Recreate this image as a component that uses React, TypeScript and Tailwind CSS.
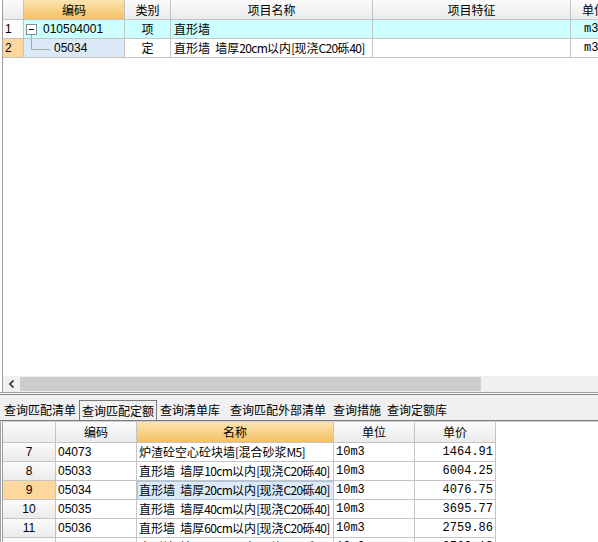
import React from "react";

const cjk = "font-['Noto_Sans_CJK_SC',sans-serif]";
const num = "font-['Liberation_Sans','Noto_Sans_CJK_SC',sans-serif]";
const mono = "font-['Liberation_Mono','Noto_Sans_CJK_SC',monospace]";

const grayHead = "bg-linear-to-b from-[#fbfbfb] to-[#ebebeb]";
const orangeHead = "bg-linear-to-b from-[#fce4b0] to-[#f5c062]";

type CellProps = {
  w: string;
  className?: string;
  children?: React.ReactNode;
};

function Cell({ w, className = "", children }: CellProps) {
  return (
    <div
      className={`${w} box-border flex h-full shrink-0 items-center overflow-hidden whitespace-nowrap border-r border-b border-[#c4c4c4] text-[12px] text-black ${className}`}
    >
      {children}
    </div>
  );
}

// the grid font draws latin half-width, so squeeze the ascii runs a bit
function Mixed({ text }: { text: string }) {
  const parts = text.split(/([\x20-\x7e]+)/).filter(Boolean);
  return (
    <span>
      {parts.map((p, i) =>
        /^[\x20-\x7e]+$/.test(p) ? (
          <span key={i} className="tracking-[-0.7px]">
            {p.replace(/ /g, "\u2002")}
          </span>
        ) : (
          <span key={i}>{p}</span>
        )
      )}
    </span>
  );
}

function MinusBox() {
  return (
    <svg width="11" height="19" viewBox="0 0 11 19" className="shrink-0">
      <rect x="0.5" y="4.5" width="10" height="10" fill="#fff" stroke="#8a8a8a" />
      <line x1="3" y1="9.5" x2="8" y2="9.5" stroke="#000" />
      <line x1="5.5" y1="15" x2="5.5" y2="19" stroke="#a8a8a8" />
    </svg>
  );
}

function TreeEnd() {
  return (
    <svg width="25" height="19" viewBox="0 0 25 19" className="shrink-0">
      <path d="M5.5 0 V10.5 H24" fill="none" stroke="#a8a8a8" />
    </svg>
  );
}

const matches = [
  { n: "7", code: "04073", name: "炉渣砼空心砼块墙[混合砂浆M5]", unit: "10m3", price: "1464.91" },
  { n: "8", code: "05033", name: "直形墙 墙厚10cm以内[现浇C20砾40]", unit: "10m3", price: "6004.25" },
  { n: "9", code: "05034", name: "直形墙 墙厚20cm以内[现浇C20砾40]", unit: "10m3", price: "4076.75", active: true },
  { n: "10", code: "05035", name: "直形墙 墙厚40cm以内[现浇C20砾40]", unit: "10m3", price: "3695.77" },
  { n: "11", code: "05036", name: "直形墙 墙厚60cm以内[现浇C20砾40]", unit: "10m3", price: "2759.86" },
  { n: "12", code: "05037", name: "直形墙 墙厚80cm以内[现浇C20砾40]", unit: "10m3", price: "2563.18" },
];

const tabs = ["查询匹配清单", "查询匹配定额", "查询清单库", "查询匹配外部清单", "查询措施", "查询定额库"];

export default function App() {
  return (
    <div className={`flex h-[542px] w-[598px] flex-col overflow-hidden bg-white ${cjk}`}>
      {/* top grid */}
      <div className="flex h-[392px] shrink-0 flex-col pl-[2px]">
        <div className="flex min-h-0 flex-1 flex-col border-l border-[#a0a0a0]">
          <div className="flex h-[20px]">
            <Cell w="w-[21px]" className={grayHead} />
            <Cell w="w-[101px]" className={`${orangeHead} justify-center text-[#800080]`}>编码</Cell>
            <Cell w="w-[46px]" className={`${grayHead} justify-center`}>类别</Cell>
            <Cell w="w-[202px]" className={`${grayHead} justify-center`}>项目名称</Cell>
            <Cell w="w-[198px]" className={`${grayHead} justify-center`}>项目特征</Cell>
            <Cell w="w-[60px]" className={`${grayHead} pl-[11px]`}>单位</Cell>
          </div>
          <div className="flex h-[19px]">
            <Cell w="w-[21px]" className={`bg-[#fbfbfb] pl-[2px] ${num}`}>1</Cell>
            <Cell w="w-[101px]" className={`bg-[#ccffff] pl-[2px] ${num} text-[11.5px]`}>
              <MinusBox />
              <span className="ml-[6px]">010504001</span>
            </Cell>
            <Cell w="w-[46px]" className="justify-center bg-[#ccffff]">项</Cell>
            <Cell w="w-[202px]" className="bg-[#ccffff] pl-[3px]">直形墙</Cell>
            <Cell w="w-[198px]" className="bg-[#ccffff]" />
            <Cell w="w-[60px]" className={`bg-[#ccffff] pl-[13px] ${mono} text-[11px]`}>m3</Cell>
          </div>
          <div className="flex h-[19px]">
            <Cell w="w-[21px]" className={`bg-[#fdd79c] pl-[2px] text-[#800080] ${num}`}>2</Cell>
            <Cell w="w-[101px]" className={`bg-[#dce9f7] pl-[2px] ${num} text-[11.5px]`}>
              <TreeEnd />
              <span className="ml-[3px]">05034</span>
            </Cell>
            <Cell w="w-[46px]" className="justify-center">定</Cell>
            <Cell w="w-[202px]" className="pl-[3px]">
              <Mixed text="直形墙 墙厚20cm以内[现浇C20砾40]" />
            </Cell>
            <Cell w="w-[198px]" />
            <Cell w="w-[60px]" className={`pl-[13px] ${mono} text-[11px]`}>m3</Cell>
          </div>
          <div className="flex-1" />
          {/* horizontal scrollbar */}
          <div className="flex h-[16px] shrink-0 bg-[#f0f0f0]">
            <div className="flex w-[17px] items-center justify-center">
              <svg width="6" height="8" viewBox="0 0 6 8">
                <path d="M4.5 0.5 L1 4 L4.5 7.5" fill="none" stroke="#333" strokeWidth="1.6" />
              </svg>
            </div>
            <div className="my-[1px] w-[461px] bg-[#cdcdcd]" />
          </div>
        </div>
      </div>
      <div className="h-[1px] shrink-0 bg-[#a0a0a0]" />
      <div className="h-[1px] shrink-0 bg-[#f8f8f8]" />
      <div className="h-[1px] shrink-0 bg-[#888888]" />

      {/* tabs */}
      <div className="flex h-[25px] shrink-0 items-end bg-[#f0f0f0] pl-[1px]">
        {tabs.map((t, i) => (
          <div
            key={t}
            className={`flex h-[20px] items-center whitespace-nowrap text-[12px] text-black ${
              i === 1 ? "border border-b-0 border-[#7a7a7a] px-[2px]" : "px-[3px]"
            } ${i === 3 ? "ml-[4px]" : ""} ${i === 4 ? "ml-[1px]" : ""}`}
          >
            {t}
          </div>
        ))}
      </div>
      <div className="h-[1px] shrink-0 bg-[#7a7a7a]" />
      <div className="h-[1px] shrink-0 bg-[#d0d0d0]" />

      {/* bottom grid */}
      <div className="flex min-h-0 flex-1">
        <div className="w-[1px] shrink-0 bg-[#a0a0a0]" />
        <div className="w-[1px] shrink-0 bg-white" />
        <div className="flex min-w-0 flex-1 flex-col border-l border-[#a0a0a0]">
          <div className="flex h-[21px] shrink-0">
            <Cell w="w-[53px]" className={grayHead} />
            <Cell w="w-[81px]" className={`${grayHead} justify-center`}>编码</Cell>
            <Cell w="w-[197px]" className={`${orangeHead} justify-center text-[#800080]`}>名称</Cell>
            <Cell w="w-[81px]" className={`${grayHead} justify-center`}>单位</Cell>
            <Cell w="w-[81px]" className={`${grayHead} justify-center`}>单价</Cell>
          </div>
          {matches.map((m) => (
            <div key={m.n} className="flex h-[19px] shrink-0">
              <Cell
                w="w-[53px]"
                className={`justify-center ${num} ${
                  m.active ? "bg-[#fdd79c] text-[#800080]" : grayHead
                }`}
              >
                {m.n}
              </Cell>
              <Cell w="w-[81px]" className={`pl-[2px] ${num} text-[11.5px]`}>{m.code}</Cell>
              <Cell
                w="w-[197px]"
                className={`pl-[2px] ${m.active ? "bg-[#dce9f7] outline outline-1 -outline-offset-1 outline-[#a9c4e4]" : ""}`}
              >
                <Mixed text={m.name} />
              </Cell>
              <Cell w="w-[81px]" className={`pl-[2px] ${mono} text-[11px]`}>{m.unit}</Cell>
              <Cell w="w-[81px]" className={`justify-end pr-[2px] ${mono} text-[11px]`}>{m.price}</Cell>
            </div>
          ))}
        </div>
      </div>
    </div>
  );
}
